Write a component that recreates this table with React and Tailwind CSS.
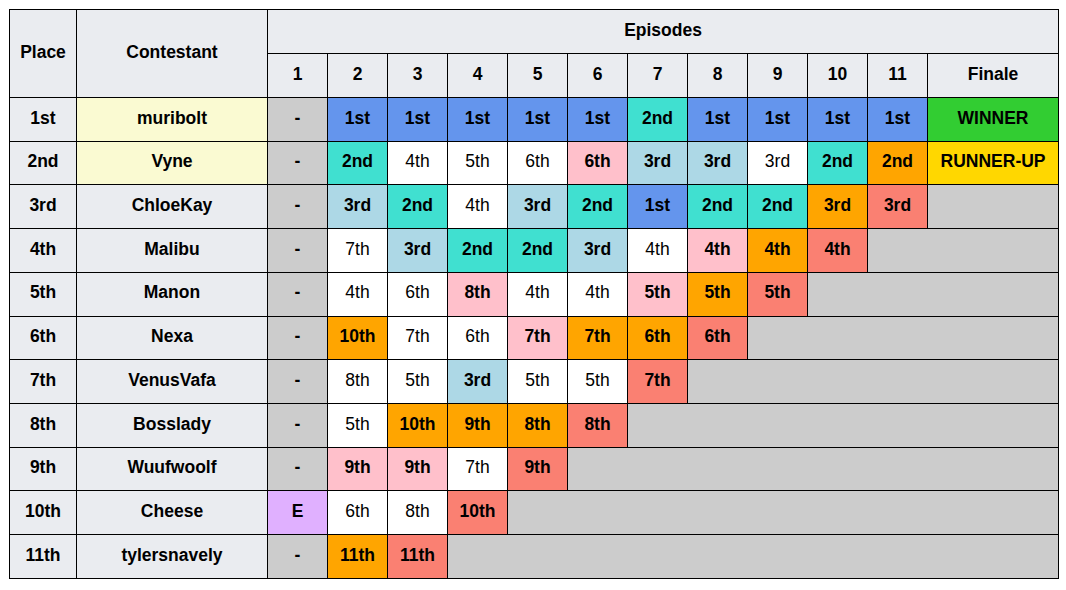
import React from "react";

const C = {
  b: "bg-[#6495ed] font-bold",
  t: "bg-[#40e0d0] font-bold",
  l: "bg-[#add8e6] font-bold",
  o: "bg-[#ffa500] font-bold",
  p: "bg-[#ffc0cb] font-bold",
  s: "bg-[#fa8072] font-bold",
  w: "bg-white font-normal",
  e: "bg-[#e0b0ff] font-bold",
  g: "bg-[#cccccc] font-bold",
};

const rows = [
  { place: "1st", name: "muribolt", y: true, cells: [["-", "g"], ["1st", "b"], ["1st", "b"], ["1st", "b"], ["1st", "b"], ["1st", "b"], ["2nd", "t"], ["1st", "b"], ["1st", "b"], ["1st", "b"], ["1st", "b"]], finale: ["WINNER", "bg-[#32cd32]"] },
  { place: "2nd", name: "Vyne", y: true, cells: [["-", "g"], ["2nd", "t"], ["4th", "w"], ["5th", "w"], ["6th", "w"], ["6th", "p"], ["3rd", "l"], ["3rd", "l"], ["3rd", "w"], ["2nd", "t"], ["2nd", "o"]], finale: ["RUNNER-UP", "bg-[#ffd700]"] },
  { place: "3rd", name: "ChloeKay", cells: [["-", "g"], ["3rd", "l"], ["2nd", "t"], ["4th", "w"], ["3rd", "l"], ["2nd", "t"], ["1st", "b"], ["2nd", "t"], ["2nd", "t"], ["3rd", "o"], ["3rd", "s"]], span: 1 },
  { place: "4th", name: "Malibu", cells: [["-", "g"], ["7th", "w"], ["3rd", "l"], ["2nd", "t"], ["2nd", "t"], ["3rd", "l"], ["4th", "w"], ["4th", "p"], ["4th", "o"], ["4th", "s"]], span: 2 },
  { place: "5th", name: "Manon", cells: [["-", "g"], ["4th", "w"], ["6th", "w"], ["8th", "p"], ["4th", "w"], ["4th", "w"], ["5th", "p"], ["5th", "o"], ["5th", "s"]], span: 3 },
  { place: "6th", name: "Nexa", cells: [["-", "g"], ["10th", "o"], ["7th", "w"], ["6th", "w"], ["7th", "p"], ["7th", "o"], ["6th", "o"], ["6th", "s"]], span: 4 },
  { place: "7th", name: "VenusVafa", cells: [["-", "g"], ["8th", "w"], ["5th", "w"], ["3rd", "l"], ["5th", "w"], ["5th", "w"], ["7th", "s"]], span: 5 },
  { place: "8th", name: "Bosslady", cells: [["-", "g"], ["5th", "w"], ["10th", "o"], ["9th", "o"], ["8th", "o"], ["8th", "s"]], span: 6 },
  { place: "9th", name: "Wuufwoolf", cells: [["-", "g"], ["9th", "p"], ["9th", "p"], ["7th", "w"], ["9th", "s"]], span: 7 },
  { place: "10th", name: "Cheese", cells: [["E", "e"], ["6th", "w"], ["8th", "w"], ["10th", "s"]], span: 8 },
  { place: "11th", name: "tylersnavely", cells: [["-", "g"], ["11th", "o"], ["11th", "s"]], span: 9 },
];

const td = "border border-black text-center align-middle p-0 pb-[2px]";

export default function App() {
  return (
    <div className="bg-white w-[1066px] h-[590px] pl-[9px] pt-[9px]" style={{ fontFamily: '"Liberation Sans", Arial, sans-serif' }}>
      <table className="border-collapse table-fixed w-[1049px] text-[17.5px] leading-none text-black">
        <colgroup>
          <col className="w-[67px]" />
          <col className="w-[191px]" />
          {Array.from({ length: 11 }).map((_, i) => (
            <col key={i} className="w-[60px]" />
          ))}
          <col className="w-[131px]" />
        </colgroup>
        <thead>
          <tr className="h-[44px]">
            <th rowSpan={2} className={`${td} bg-[#eaecf0] font-bold`}>Place</th>
            <th rowSpan={2} className={`${td} bg-[#eaecf0] font-bold`}>Contestant</th>
            <th colSpan={12} className={`${td} bg-[#eaecf0] font-bold`}>Episodes</th>
          </tr>
          <tr className="h-[44px]">
            {Array.from({ length: 11 }).map((_, i) => (
              <th key={i} className={`${td} bg-[#eaecf0] font-bold`}>{i + 1}</th>
            ))}
            <th className={`${td} bg-[#eaecf0] font-bold`}>Finale</th>
          </tr>
        </thead>
        <tbody>
          {rows.map((r) => (
            <tr key={r.place} className="h-[43.73px]">
              <td className={`${td} bg-[#eaecf0] font-bold`}>{r.place}</td>
              <td className={`${td} font-bold ${r.y ? "bg-[#fafad2]" : "bg-[#eaecf0]"}`}>{r.name}</td>
              {r.cells.map(([txt, c], i) => (
                <td key={i} className={`${td} ${C[c]}`}>{txt}</td>
              ))}
              {r.finale ? (
                <td className={`${td} font-bold ${r.finale[1]}`}>{r.finale[0]}</td>
              ) : (
                <td colSpan={r.span} className={`${td} bg-[#cccccc]`}></td>
              )}
            </tr>
          ))}
        </tbody>
      </table>
    </div>
  );
}
